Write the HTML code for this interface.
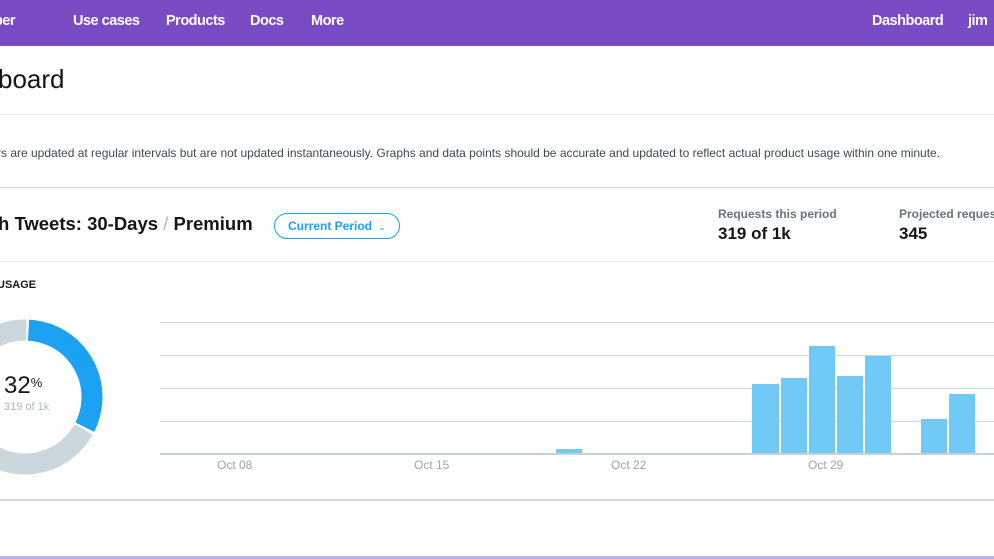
<!DOCTYPE html>
<html><head><meta charset="utf-8"><style>
*{margin:0;padding:0;box-sizing:border-box}
body{width:994px;height:559px;overflow:hidden;background:#fff;font-family:"Liberation Sans",Arial,sans-serif;position:relative;color:#14171a}
.nav{position:absolute;left:0;top:0;width:994px;height:46px;background:#794bc4}
.nav span{position:absolute;top:13px;color:#fff;font-size:14.5px;font-weight:bold;letter-spacing:-0.5px}
.a{position:absolute;white-space:nowrap}
.hr{position:absolute;left:0;width:994px;height:1px;background:#e1e8ed}
.grid{position:absolute;left:160px;width:834px;height:1px;background:#ccd6dd}
.bar{position:absolute;background:#71c9f8}
.lbl{position:absolute;top:458px;font-size:12px;color:#9aa6ae}
</style></head><body>
<div class="nav">
<span style="left:-6px">per</span>
<span style="left:73px">Use cases</span>
<span style="left:166px">Products</span>
<span style="left:250px">Docs</span>
<span style="left:311px">More</span>
<span style="left:872px">Dashboard</span>
<span style="left:968px">jim</span>
</div>
<div class="a" style="left:-2px;top:64px;font-size:26px;color:#14171a">board</div>
<div class="hr" style="top:114px"></div>
<div class="a" style="left:-3px;top:146px;font-size:12px;color:#3d4a53">rs are updated at regular intervals but are not updated instantaneously. Graphs and data points should be accurate and updated to reflect actual product usage within one minute.</div>
<div class="hr" style="top:187px;background:#ccd6dd"></div>
<div class="a" style="left:-2px;top:213px;font-size:18.5px;font-weight:bold">h Tweets: 30-Days <span style="color:#aab8c2;font-weight:normal">/</span> Premium</div>
<div class="a" style="left:274px;top:213px;width:126px;height:26px;border:1px solid #1da1f2;border-radius:14px;color:#1da1f2;font-size:12px;font-weight:bold;line-height:24px;padding-left:13px">Current Period <span style="font-weight:normal;font-size:9px;margin-left:3px">&#8964;</span></div>
<div class="a" style="left:718px;top:207px;font-size:12px;font-weight:bold;color:#66757f">Requests this period</div>
<div class="a" style="left:718px;top:224px;font-size:17px;font-weight:bold">319 of 1k</div>
<div class="a" style="left:899px;top:207px;font-size:12px;font-weight:bold;color:#66757f">Projected requests</div>
<div class="a" style="left:899px;top:224px;font-size:17px;font-weight:bold">345</div>
<div class="hr" style="top:261px"></div>
<div class="a" style="left:-3px;top:279px;font-size:11px;font-weight:bold">USAGE</div>
<svg class="a" style="left:0;top:300px" width="140" height="180" viewBox="0 300 140 180">
<circle cx="25" cy="397" r="67" fill="none" stroke="#ccd6dd" stroke-width="21" stroke-dasharray="283 400" transform="rotate(29 25 397)"/>
<circle cx="25" cy="397" r="67" fill="none" stroke="#1da1f2" stroke-width="21" stroke-dasharray="133 400" transform="rotate(-87 25 397)"/>
</svg>
<div class="a" style="left:4px;top:372px;font-size:24px;color:#14171a">32<span style="font-size:13px;vertical-align:top;position:relative;top:3px">%</span></div>
<div class="a" style="left:4px;top:401px;font-size:11px;color:#aab8c2">319 of 1k</div>
<div class="grid" style="top:322px"></div>
<div class="grid" style="top:355px"></div>
<div class="grid" style="top:388px"></div>
<div class="grid" style="top:421px"></div>
<div class="bar" style="left:556px;top:449px;width:26px;height:5px"></div>
<div class="bar" style="left:752px;top:384px;width:27px;height:70px"></div>
<div class="bar" style="left:781px;top:378px;width:26px;height:76px"></div>
<div class="bar" style="left:809px;top:346px;width:26px;height:108px"></div>
<div class="bar" style="left:837px;top:376px;width:26px;height:78px"></div>
<div class="bar" style="left:865px;top:356px;width:26px;height:98px"></div>
<div class="bar" style="left:921px;top:419px;width:26px;height:35px"></div>
<div class="bar" style="left:949px;top:394px;width:26px;height:60px"></div>
<div class="grid" style="top:453px;height:2px;background:#c5d2d8"></div>
<div class="lbl" style="left:217px">Oct 08</div>
<div class="lbl" style="left:414px">Oct 15</div>
<div class="lbl" style="left:611px">Oct 22</div>
<div class="lbl" style="left:808px">Oct 29</div>
<div class="hr" style="top:499px;height:2px;background:#d4dcdc"></div>
<div class="hr" style="top:556px;height:3px;background:#c0b0f0"></div>
</body></html>
